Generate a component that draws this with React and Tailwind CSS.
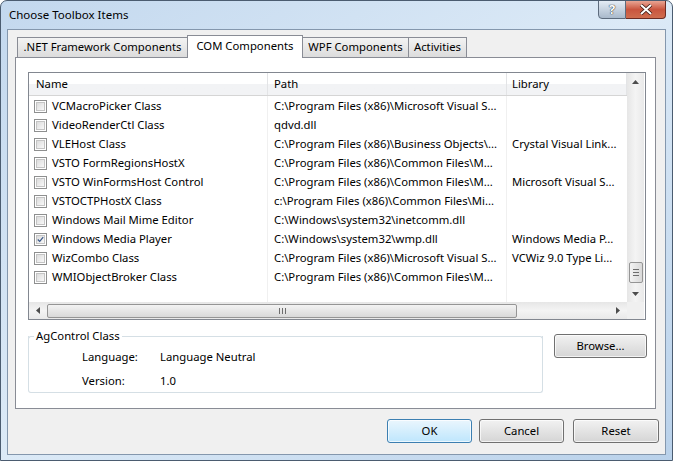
import React from 'react';

const rows = [
  { name: 'VCMacroPicker Class', path: 'C:\\Program Files (x86)\\Microsoft Visual S...', lib: '' },
  { name: 'VideoRenderCtl Class', path: 'qdvd.dll', lib: '' },
  { name: 'VLEHost Class', path: 'C:\\Program Files (x86)\\Business Objects\\...', lib: 'Crystal Visual Link...' },
  { name: 'VSTO FormRegionsHostX', path: 'C:\\Program Files (x86)\\Common Files\\M...', lib: '' },
  { name: 'VSTO WinFormsHost Control', path: 'C:\\Program Files (x86)\\Common Files\\M...', lib: 'Microsoft Visual S...' },
  { name: 'VSTOCTPHostX Class', path: 'c:\\Program Files (x86)\\Common Files\\Mi...', lib: '' },
  { name: 'Windows Mail Mime Editor', path: 'C:\\Windows\\system32\\inetcomm.dll', lib: '' },
  { name: 'Windows Media Player', path: 'C:\\Windows\\system32\\wmp.dll', lib: 'Windows Media P...', checked: true },
  { name: 'WizCombo Class', path: 'C:\\Program Files (x86)\\Microsoft Visual S...', lib: 'VCWiz 9.0 Type Li...' },
  { name: 'WMIObjectBroker Class', path: 'C:\\Program Files (x86)\\Common Files\\M...', lib: '' },
];

const Check = ({ checked }) => (
  <div className="w-[13px] h-[13px] border border-[#8e8f8f] bg-white flex items-center justify-center shrink-0">
    <div className="w-[9px] h-[9px] bg-gradient-to-br from-[#dcdcdc] to-[#f8f8f8] border border-[#c4c4c4] flex items-center justify-center">
      {checked && (
        <svg width="9" height="9" viewBox="0 0 9 9">
          <path d="M1 4.5 L3.5 7 L8 1.5" stroke="#3c5a8a" strokeWidth="1.6" fill="none" />
        </svg>
      )}
    </div>
  </div>
);

const Button = ({ children, def, w = 'w-[85px]' }) => (
  <div
    className={`${w} h-[24px] rounded-[3px] border ${def ? 'border-[#3c7fb1] from-[#eaf6fd] to-[#bee6fd]' : 'border-[#707070] from-[#f2f2f2] to-[#d5d5d5]'} bg-gradient-to-b flex items-center justify-center text-[11.3px] text-black shadow-[inset_0_0_0_1px_rgba(255,255,255,0.7)]`}
  >
    {children}
  </div>
);

const Tab = ({ children, selected, w }) =>
  selected ? (
    <div className={`${w} h-[23px] bg-white border border-b-0 border-[#898c95] flex justify-center items-start pt-[2px] -mb-px relative z-10 -mx-px`}>
      {children}
    </div>
  ) : (
    <div className={`${w} h-[20px] bg-gradient-to-b from-[#f3f3f3] to-[#dcdcdc] border border-b-0 border-[#898c95] flex justify-center items-center`}>
      {children}
    </div>
  );

const Arrow = ({ dir }) => {
  const d = {
    up: 'M0 4 L3.5 0 L7 4 Z',
    down: 'M0 0 L7 0 L3.5 4 Z',
    left: 'M4 0 L4 7 L0 3.5 Z',
    right: 'M0 0 L4 3.5 L0 7 Z',
  }[dir];
  const horiz = dir === 'left' || dir === 'right';
  return (
    <svg width={horiz ? 4 : 7} height={horiz ? 7 : 4} viewBox={horiz ? '0 0 4 7' : '0 0 7 4'}>
      <path d={d} fill="#4d4d4d" />
    </svg>
  );
};

export default function App() {
  return (
    <div
      className="w-[673px] h-[461px] flex flex-col rounded-t-[7px] border border-[#4b5c70] bg-gradient-to-br from-[#c3d8ee] via-[#dceaf7] to-[#b9d1ea] text-black overflow-hidden"
      style={{ fontFamily: '"Noto Sans", "Open Sans", sans-serif' }}
    >
      {/* title bar */}
      <div className="h-[28px] flex shrink-0">
        <div className="pl-[8px] pt-[5px] text-[11.5px]">Choose Toolbox Items</div>
        <div className="ml-auto mr-[6px] flex -mt-px">
          <div className="w-[28px] h-[19px] rounded-bl-[4px] border border-[#5d6b7d] bg-gradient-to-b from-[#e4ecf5] to-[#a9b9cb] flex items-center justify-center text-white text-[13px] font-bold" style={{ textShadow: '0 0 1px #222, 0 0 1px #222' }}>
            ?
          </div>
          <div className="w-[40px] h-[19px] rounded-br-[4px] border border-l-0 border-[#6b2b23] bg-gradient-to-b from-[#e8a493] via-[#c9553f] to-[#cf6d4f] flex items-center justify-center">
            <svg width="14" height="11" viewBox="0 0 14 11">
              <path d="M2 1 L12 10 M12 1 L2 10" stroke="#3b1a14" strokeWidth="3.6" />
              <path d="M2 1 L12 10 M12 1 L2 10" stroke="#ffffff" strokeWidth="2" />
            </svg>
          </div>
        </div>
      </div>

      {/* client */}
      <div className="mx-[6px] mb-[5px] flex-1 bg-[#f0f0f0] border border-[#8497ad] flex flex-col">
        {/* tab strip */}
        <div className="mt-[5px] ml-[9px] flex items-end h-[22px] text-[11.3px] relative z-10">
          <Tab w="w-[171px]">.NET Framework Components</Tab>
          <Tab selected w="w-[116px]">COM Components</Tab>
          <Tab w="w-[107px]">WPF Components</Tab>
          <div className="-ml-px">
            <Tab w="w-[59px]">Activities</Tab>
          </div>
        </div>

        {/* tab page */}
        <div className="ml-[7px] mr-[9px] h-[352px] border border-[#898c95] bg-white flex flex-col">
          {/* list view */}
          <div className="mt-[14px] ml-[12px] w-[618px] h-[248px] border border-[#828790] grid grid-cols-[598px_17px] grid-rows-[229px_17px] text-[11.3px]">
            {/* content */}
            <div className="flex flex-col overflow-hidden relative">
              <div className="h-[23px] flex bg-gradient-to-b from-white from-50% to-[#f2f3f5] to-50% border-b border-[#d5d5d5]">
                <div className="w-[239px] pl-[7px] flex items-center border-r border-[#e3e4e6]">Name</div>
                <div className="w-[239px] pl-[6px] flex items-center border-r border-[#e3e4e6]">Path</div>
                <div className="w-[120px] pl-[5px] flex items-center border-r border-[#e3e4e6]">Library</div>
              </div>
              <div className="flex-1 flex">
                <div className="w-[239px] border-r border-[#f0f0f0] pt-px">
                  {rows.map((r) => (
                    <div key={r.name} className="h-[19px] flex items-center pl-[5px] gap-[5px] whitespace-nowrap">
                      <Check checked={r.checked} />
                      <span>{r.name}</span>
                    </div>
                  ))}
                </div>
                <div className="w-[239px] border-r border-[#f0f0f0] pt-px">
                  {rows.map((r) => (
                    <div key={r.name} className="h-[19px] flex items-center pl-[6px] whitespace-nowrap">
                      {r.path}
                    </div>
                  ))}
                </div>
                <div className="w-[120px] pt-px">
                  {rows.map((r) => (
                    <div key={r.name} className="h-[19px] flex items-center pl-[5px] whitespace-nowrap">
                      {r.lib}
                    </div>
                  ))}
                </div>
              </div>
            </div>
            {/* vertical scrollbar */}
            <div className="bg-gradient-to-r from-[#e6e6e6] via-[#f4f4f4] to-[#e9e9e9] flex flex-col items-center">
              <div className="h-[17px] flex items-center justify-center">
                <Arrow dir="up" />
              </div>
              <div className="flex-1 w-full flex flex-col justify-end items-center">
                <div className="w-[14px] h-[21px] mb-[2px] rounded-[2px] border border-[#959595] bg-gradient-to-r from-[#f3f3f3] to-[#d9d9d9] flex flex-col items-center justify-center gap-[2px]">
                  <div className="w-[6px] h-px bg-[#6d6d6d]" />
                  <div className="w-[6px] h-px bg-[#6d6d6d]" />
                  <div className="w-[6px] h-px bg-[#6d6d6d]" />
                </div>
              </div>
              <div className="h-[17px] flex items-center justify-center">
                <Arrow dir="down" />
              </div>
            </div>
            {/* horizontal scrollbar */}
            <div className="bg-gradient-to-b from-[#e6e6e6] via-[#f4f4f4] to-[#e9e9e9] flex items-center">
              <div className="w-[18px] flex justify-center">
                <Arrow dir="left" />
              </div>
              <div className="w-[470px] h-[14px] rounded-[2px] border border-[#959595] bg-gradient-to-b from-[#f3f3f3] to-[#d9d9d9] flex items-center justify-center gap-[2px]">
                <div className="w-px h-[6px] bg-[#6d6d6d]" />
                <div className="w-px h-[6px] bg-[#6d6d6d]" />
                <div className="w-px h-[6px] bg-[#6d6d6d]" />
              </div>
              <div className="flex-1 flex justify-end pr-[7px]">
                <Arrow dir="right" />
              </div>
            </div>
            <div className="bg-[#f0f0f0]" />
          </div>

          {/* bottom: group box + browse */}
          <div className="mt-[10px] ml-[12px] flex items-start text-[11.3px]">
            <div className="w-[515px] h-[63px] flex flex-col">
              <div className="flex items-center h-[12px] -mb-[6px]">
                <div className="w-[6px] h-[6px] mt-[6px] border-t border-l border-[#d5dfe5] rounded-tl-[3px]" />
                <span className="px-[2px] leading-none">AgControl Class</span>
                <div className="flex-1 h-px mt-px bg-[#d5dfe5]" />
                <div className="w-[6px] h-[6px] mt-[6px] border-t border-r border-[#d5dfe5] rounded-tr-[3px]" />
              </div>
              <div className="flex-1 border border-t-0 border-[#d5dfe5] rounded-b-[3px] pl-[53px] pt-[13px]">
                <div className="flex h-[16px] items-center">
                  <span className="w-[78px]">Language:</span>
                  <span>Language Neutral</span>
                </div>
                <div className="flex h-[16px] items-center mt-[8px]">
                  <span className="w-[78px]">Version:</span>
                  <span>1.0</span>
                </div>
              </div>
            </div>
            <div className="ml-[11px] mt-[4px]">
              <Button w="w-[93px]">Browse...</Button>
            </div>
          </div>
        </div>

        {/* dialog buttons */}
        <div className="mt-[10px] flex justify-end gap-[7px] mr-[6px]">
          <Button def>OK</Button>
          <Button>Cancel</Button>
          <div className="ml-[2px]">
            <Button w="w-[86px]">Reset</Button>
          </div>
        </div>
      </div>
    </div>
  );
}
